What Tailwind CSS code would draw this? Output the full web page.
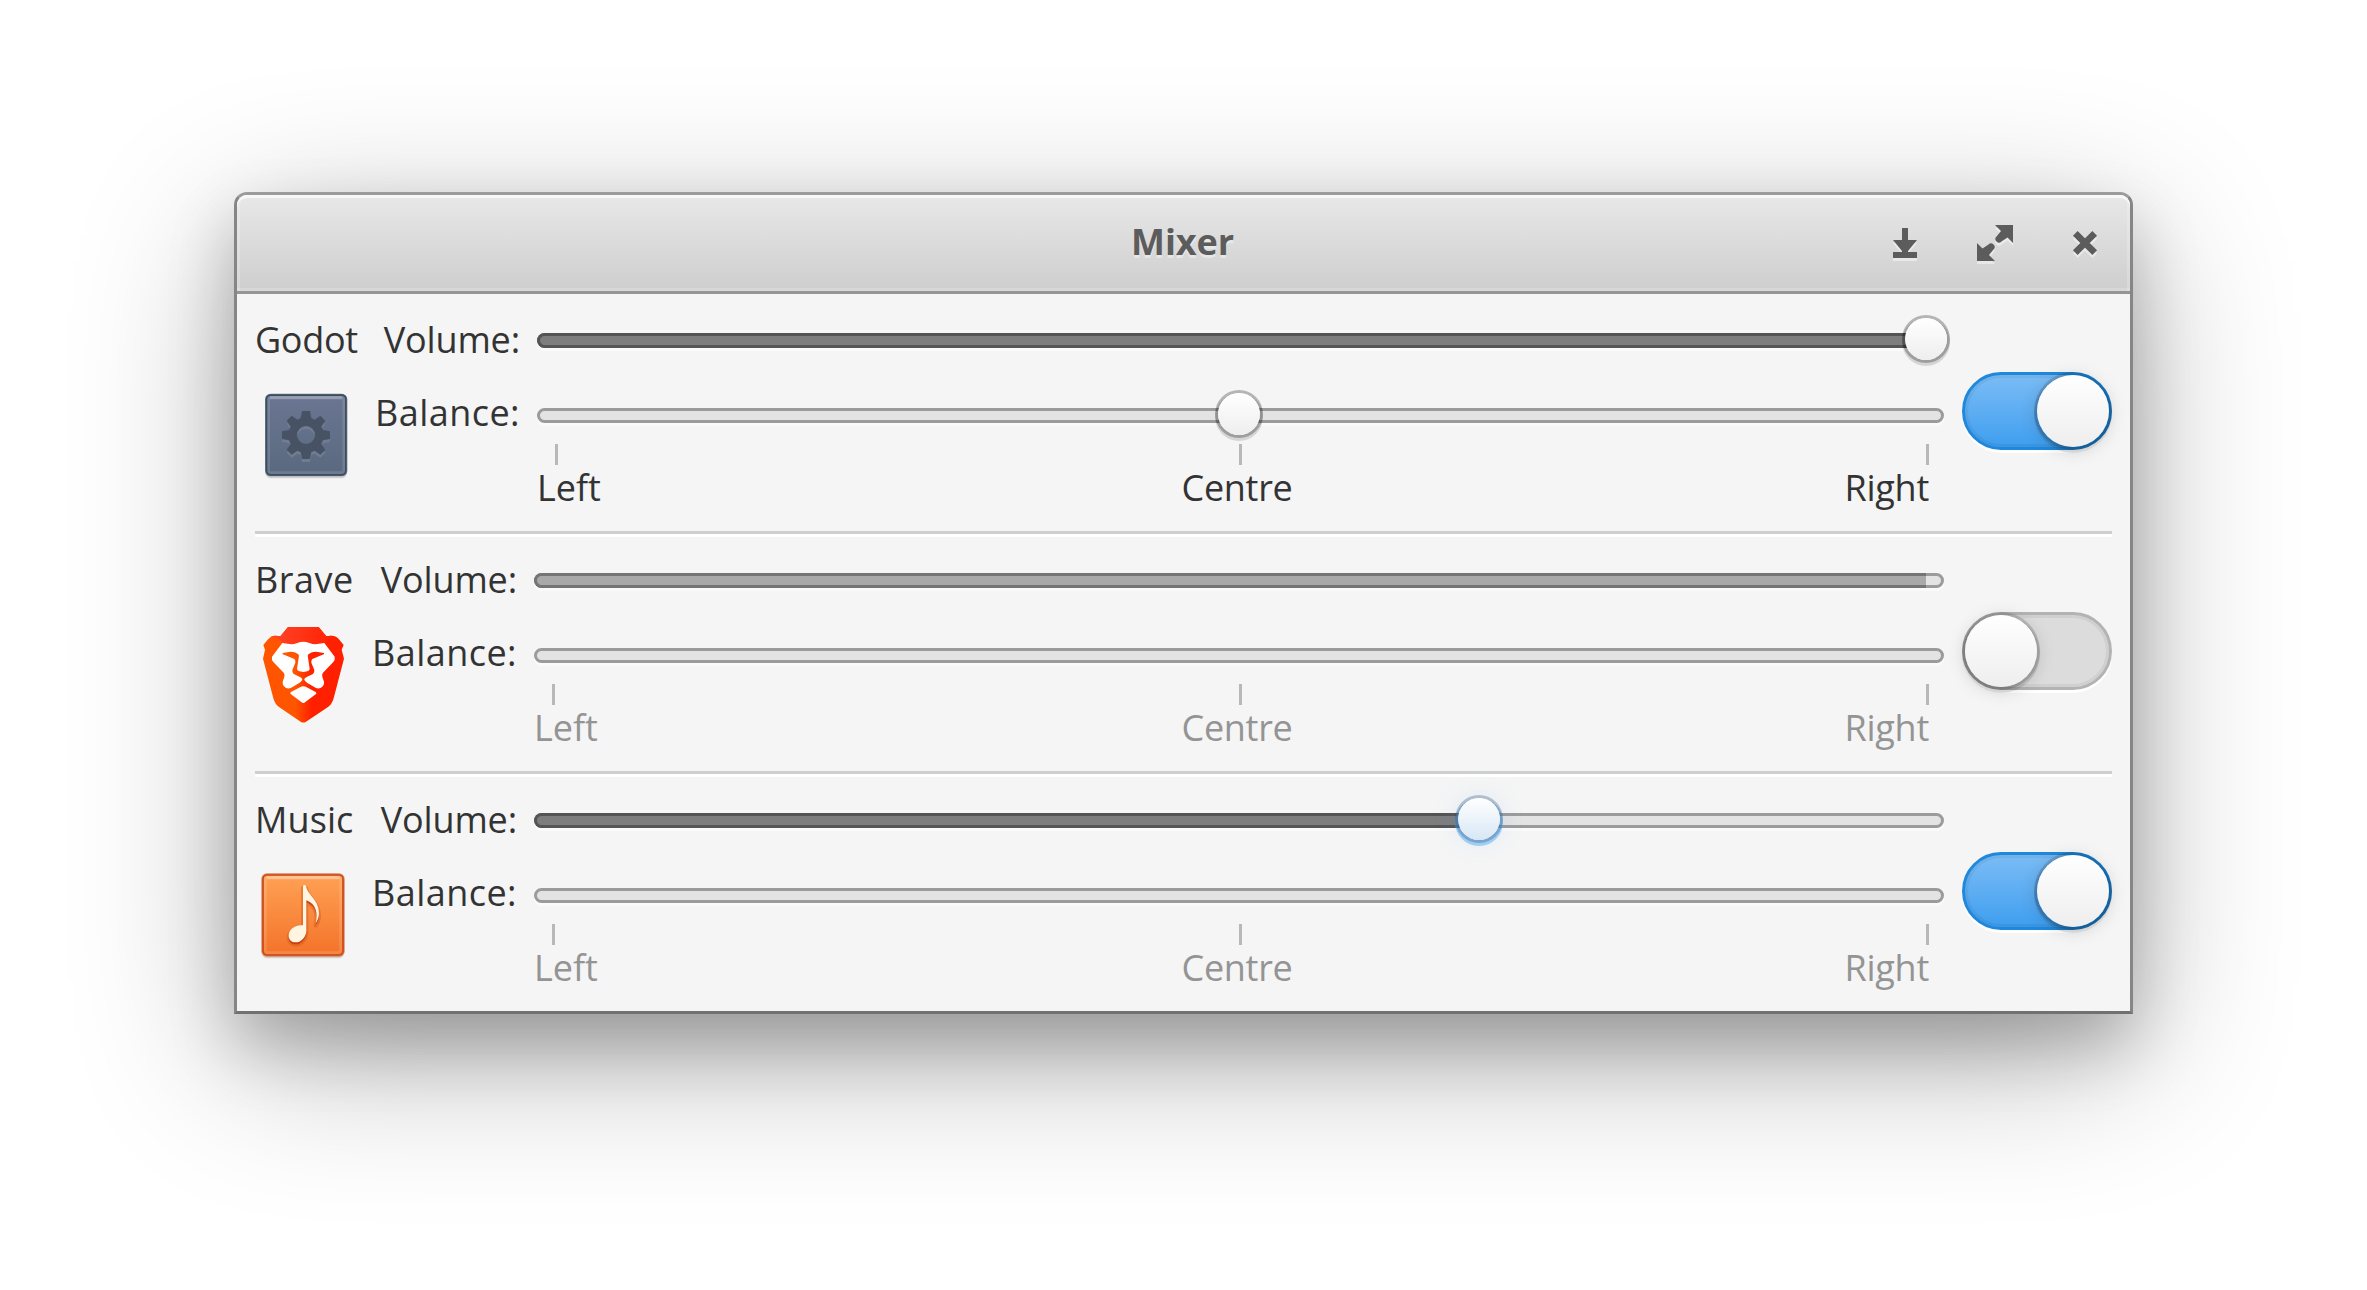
<!DOCTYPE html>
<html lang="en">
<head>
<meta charset="utf-8">
<title>Mixer</title>
<script src="https://cdn.jsdelivr.net/npm/@tailwindcss/browser@4"></script>
</head>
<body class="flex h-screen w-screen items-start overflow-hidden bg-white pl-[234px] pt-[192px] font-['Open_Sans',sans-serif] text-[36px] leading-[48px] text-[#333]">
<main class="flex h-[822px] w-[1899px] flex-col rounded-t-[13px] border-[3px] border-t-[#9b9b9b] border-x-[#868686] border-b-[#717171] bg-[#f5f5f5] shadow-[0_42px_160px_rgba(0,0,0,0.3),0_32px_66px_rgba(0,0,0,0.22)]">

  <!-- Title bar -->
  <header class="relative flex h-[99px] shrink-0 items-center justify-center rounded-t-[10px] border-b-[3px] border-[#959595] bg-linear-to-b from-[#e8e8e8] to-[#cecece] shadow-[inset_0_3px_0_#f8f8f8,inset_3px_0_0_rgba(255,255,255,0.2),inset_-3px_0_0_rgba(255,255,255,0.2),inset_0_-3px_0_rgba(255,255,255,0.2)]">
    <h1 class="mt-[-2px] mr-[2px] font-bold tracking-[-0.1px] text-[#5c5c5c] [text-shadow:0_3px_0_rgba(255,255,255,0.4)]">Mixer</h1>
    <nav class="absolute right-[27px] top-[30px] flex gap-[54px]">
      <svg class="size-9 overflow-visible drop-shadow-[0_3px_0_rgba(255,255,255,0.45)]" viewBox="0 0 36 36" fill="#5c5c5c"><path d="M15 3h6v12h9L21 26v1h9v6H6v-6h9v-1L6 15h9z"/></svg>
      <svg class="size-9 overflow-visible drop-shadow-[0_3px_0_rgba(255,255,255,0.45)]" viewBox="0 0 36 36" fill="#5c5c5c"><path d="M18 0H36V18L30.500 12.500L24.500 16.500A3.200 3.200 0 0 1 19.500 11.500L24 6zM0 36V18L5.500 23.500L11.500 19.500A3.200 3.200 0 0 1 16.500 24.500L12 30L18 36z"/></svg>
      <svg class="size-9 overflow-visible drop-shadow-[0_3px_0_rgba(255,255,255,0.45)]" viewBox="0 0 36 36" fill="none" stroke="#5c5c5c" stroke-width="6.600"><path d="M8.300 8.300L27.700 27.700M27.700 8.300L8.300 27.700"/></svg>
    </nav>
  </header>

  <!-- Godot -->
  <section class="mx-[18px] flex h-[240px] shrink-0 border-b-[3px] border-[#cfcfcf] shadow-[0_3px_0_#fff]">
    <div class="flex w-[102px] flex-col items-center gap-[23px] pt-[22px]">
      <h2 class="self-start tracking-[-0.3px] whitespace-nowrap">Godot</h2>
      <svg class="size-24" viewBox="24 21 288 288">
        <defs><linearGradient id="slate" x1="0" y1="0" x2="0" y2="1"><stop offset="0" stop-color="#6b7692"/><stop offset="1" stop-color="#5a697f"/></linearGradient></defs>
        <rect x="46" y="46" width="245" height="249" rx="17" fill="#000" opacity=".14"/>
        <rect x="45" y="41" width="247" height="248" rx="17" fill="#6f7f90"/>
        <rect x="49.500" y="45.500" width="238" height="239" rx="12" fill="url(#slate)" stroke="#3d4d60" stroke-width="5"/>
        <rect x="56" y="52" width="225" height="226" rx="8" fill="none" stroke="#fff" stroke-opacity=".12" stroke-width="8"/>
        <path d="M60 53H276" stroke="#fff" stroke-opacity=".22" stroke-width="9"/>
        <g fill="#6e7d91" transform="translate(0 9)">
          <path id="gear-shape" fill-rule="evenodd" d="M156 93H180L184 114L194 119L211 107L226 122L214 140L219 150L240 154V177L219 181L214 192L226 209L211 224L194 212L184 217L180 237H156L152 217L142 212L125 224L110 209L122 192L117 181L96 177V154L117 150L122 140L110 122L125 107L142 119L152 114ZM168 138A27 27 0 1 0 168 192A27 27 0 1 0 168 138Z"/>
        </g>
        <path fill="#475364" fill-rule="evenodd" d="M156 93H180L184 114L194 119L211 107L226 122L214 140L219 150L240 154V177L219 181L214 192L226 209L211 224L194 212L184 217L180 237H156L152 217L142 212L125 224L110 209L122 192L117 181L96 177V154L117 150L122 140L110 122L125 107L142 119L152 114ZM168 138A27 27 0 1 0 168 192A27 27 0 1 0 168 138Z"/>
      </svg>
    </div>
    <div class="flex w-[163px] flex-col items-end gap-[25px] pt-[22px]">
      <span class="tracking-[-0.15px]">Volume:</span>
      <span class="tracking-[0.45px]">Balance:</span>
    </div>
    <div class="ml-[17px] mr-[18px] flex grow flex-col pt-[39px]">
      <div class="relative h-[15px] rounded-full border-[3px] border-[#9b9b9b] bg-[#e3e3e3] shadow-[0_3px_0_#fafafa]">
        <div class="absolute -left-[3px] -top-[3px] h-[15px] rounded-l-full border-y-[3px] border-l-[3px] border-[#545454] bg-[#7d7d7d]" style="width:1389px"></div>
        <div class="absolute -top-[18px] size-[42px] rounded-full bg-linear-to-b from-white to-[#eeeeee] shadow-[0_0_0_3px_rgba(0,0,0,0.26),0_3px_0_3px_rgba(0,0,0,0.13)]" style="left:1365px"></div>
      </div>
      <div class="relative mt-[60px] h-[15px] rounded-full border-[3px] border-[#9b9b9b] bg-[#e3e3e3] shadow-[0_3px_0_#fafafa]">
        <div class="absolute -top-[18px] size-[42px] rounded-full bg-linear-to-b from-white to-[#eeeeee] shadow-[0_0_0_3px_rgba(0,0,0,0.26),0_3px_0_3px_rgba(0,0,0,0.13)]" style="left:678px"></div>
      </div>
      <div class="mt-[21px] flex h-[21px] justify-between pl-[18px] pr-[15px]">
        <i class="w-[3px] bg-[#b8b8b8]"></i><i class="-ml-[3px] w-[3px] bg-[#b8b8b8]"></i><i class="w-[3px] bg-[#b8b8b8]"></i>
      </div>
      <div class="mt-[-1px] flex pr-[15px]">
        <span class="flex-1">Left</span><span class="ml-[8px] tracking-[-0.3px]">Centre</span><span class="flex-1 text-right tracking-[-0.25px]">Right</span>
      </div>
    </div>
    <div class="mt-[78px] flex h-[78px] w-[150px] justify-end rounded-full border-[3px] border-[#2088db] bg-linear-to-b from-[#7abcf5] to-[#3d9eef] shadow-[0_3px_0_#fff,inset_0_0_0_3px_rgba(0,0,0,0.05)]">
      <div class="size-[72px] rounded-full bg-linear-to-b from-white to-[#eeeeee] shadow-[0_0_0_3px_rgba(0,0,0,0.14),0_3px_0_3px_rgba(0,0,0,0.1),0_3px_18px_rgba(0,0,0,0.17)]"></div>
    </div>
  </section>

  <!-- Brave -->
  <section class="mx-[18px] flex h-[240px] shrink-0 border-b-[3px] border-[#cfcfcf] shadow-[0_3px_0_#fff]">
    <div class="flex w-24 flex-col items-center gap-[23px] pt-[22px]">
      <h2 class="self-start tracking-[0.5px] whitespace-nowrap">Brave</h2>
      <svg class="size-24" viewBox="15 36 288 288">
        <defs>
          <linearGradient id="mane" gradientUnits="userSpaceOnUse" x1="39" y1="0" x2="282" y2="0"><stop offset=".4" stop-color="#f50"/><stop offset=".6" stop-color="#ff2000"/></linearGradient>
          <linearGradient id="crown" gradientUnits="userSpaceOnUse" x1="60" y1="0" x2="260" y2="0"><stop offset="0" stop-color="#ff452a"/><stop offset="1" stop-color="#ff2000"/></linearGradient>
        </defs>
        <path fill="url(#mane)" d="M114 36H206L229 64C245 60 258 62 268 74L281 90L275 104L282 131L251 250Q246 268 233 277L168 320Q160 325 152 320L88 277Q75 268 70 250L39 131L45 104L40 90L53 74C63 62 76 60 91 64Z"/>
        <path fill="url(#crown)" d="M114 36H206L229 64C245 60 258 62 268 74C252 66 236 70 224 86L196 90Q178 83 160 80Q144 82 124 90L97 86C90 70 74 64 60 67C70 61 80 62 91 64Z"/>
        <path fill="#fff" d="M97 84L124 88Q132 88 142 84Q152 80 160 80Q168 80 178 84Q188 88 196 88L223 84L254 125Q256 134 250 141L219 173Q215 178 217 185L222 200Q223 207 219 213L213 218Q205 222 198 219L172 204Q162 197 163 192Q163 190 170 186L189 177Q194 172 193 165L184 143Q183 136 187 132L223 117Q223 113 217 113L198 110Q182 111 175 118Q172 122 174 128L179 162Q178 168 172 169L160 171L148 169Q142 168 141 162L146 128Q148 122 145 118Q138 111 122 110L103 113Q97 113 97 117L133 132Q137 136 136 143L127 165Q126 172 131 177L150 186Q157 190 157 192Q158 197 148 204L122 219Q115 222 107 218L101 213Q97 207 98 200L103 185Q105 178 101 173L70 141Q64 134 66 125ZM160 214Q165 214 170 217L197 231Q201 234 198 237L163 263Q160 265 157 263L122 237Q119 234 123 231L150 217Q155 214 160 214Z"/>
      </svg>
    </div>
    <div class="flex w-[166px] flex-col items-end gap-[25px] pt-[22px]">
      <span class="tracking-[-0.15px]">Volume:</span>
      <span class="tracking-[0.45px]">Balance:</span>
    </div>
    <div class="ml-[17px] mr-[18px] flex grow flex-col pt-[39px]">
      <div class="relative h-[15px] rounded-full border-[3px] border-[#9b9b9b] bg-[#e3e3e3] shadow-[0_3px_0_#fafafa]">
        <div class="absolute -left-[3px] -top-[3px] h-[15px] rounded-l-full border-y-[3px] border-l-[3px] border-[#757575] bg-[#a9a9a9]" style="width:1392px"></div>
      </div>
      <div class="mt-[60px] h-[15px] rounded-full border-[3px] border-[#9b9b9b] bg-[#e3e3e3] shadow-[0_3px_0_#fafafa]"></div>
      <div class="mt-[21px] flex h-[21px] justify-between pl-[18px] pr-[15px]">
        <i class="w-[3px] bg-[#b8b8b8]"></i><i class="w-[3px] bg-[#b8b8b8]"></i><i class="w-[3px] bg-[#b8b8b8]"></i>
      </div>
      <div class="mt-[-1px] flex pr-[15px] text-[#949494]">
        <span class="flex-1">Left</span><span class="ml-[11px] tracking-[-0.3px]">Centre</span><span class="flex-1 text-right tracking-[-0.25px]">Right</span>
      </div>
    </div>
    <div class="mt-[78px] flex h-[78px] w-[150px] justify-start rounded-full border-[3px] border-[#b3b3b3] bg-[#dcdcdc] shadow-[0_3px_0_#fff,inset_0_0_0_3px_rgba(0,0,0,0.05)]">
      <div class="size-[72px] rounded-full bg-linear-to-b from-white to-[#eeeeee] shadow-[0_0_0_3px_rgba(0,0,0,0.14),0_3px_0_3px_rgba(0,0,0,0.1),0_3px_18px_rgba(0,0,0,0.17)]"></div>
    </div>
  </section>

  <!-- Music -->
  <section class="mx-[18px] flex h-[237px] shrink-0">
    <div class="flex w-24 flex-col items-center gap-[23px] pt-[22px]">
      <h2 class="self-start tracking-[0.1px] whitespace-nowrap">Music</h2>
      <svg class="size-24" viewBox="90 291 288 288">
        <defs><linearGradient id="orange" x1="0" y1="0" x2="0" y2="1"><stop offset="0" stop-color="#ffa154"/><stop offset="1" stop-color="#f37329"/></linearGradient></defs>
        <rect x="110" y="316" width="248" height="249" rx="17" fill="#000" opacity=".14"/>
        <rect x="109" y="310" width="250" height="250" rx="17" fill="#d98766"/>
        <rect x="114" y="315" width="240" height="240" rx="12" fill="url(#orange)" stroke="#cc4a16" stroke-width="5"/>
        <rect x="121" y="322" width="226" height="226" rx="8" fill="none" stroke="#fff" stroke-opacity=".14" stroke-width="8"/>
        <path d="M125 323H343" stroke="#fff" stroke-opacity=".3" stroke-width="9"/>
        <g fill="#d9561b" stroke="#d9561b" stroke-width="12" stroke-linejoin="round" opacity=".45"><use href="#note" y="7"/></g>
        <g fill="#c6410e"><use href="#note" y="6"/></g>
        <g fill="#fff5e0"><path id="note" d="M234 347Q238 343 243 347C246 374 282 388 282 430C282 443 277 453 272 460C279 430 274 402 244 391V482C244 500 229 517 212 517C199 517 191 508 191 497C191 480 208 463 234 466Z"/></g>
      </svg>
    </div>
    <div class="flex w-[166px] flex-col items-end gap-[25px] pt-[22px]">
      <span class="tracking-[-0.15px]">Volume:</span>
      <span class="tracking-[0.45px]">Balance:</span>
    </div>
    <div class="ml-[17px] mr-[18px] flex grow flex-col pt-[39px]">
      <div class="relative h-[15px] rounded-full border-[3px] border-[#9b9b9b] bg-[#e3e3e3] shadow-[0_3px_0_#fafafa]">
        <div class="absolute -left-[3px] -top-[3px] h-[15px] rounded-l-full border-y-[3px] border-l-[3px] border-[#545454] bg-[#7d7d7d]" style="width:945px"></div>
        <div class="absolute -top-[18px] size-[42px] rounded-full bg-linear-to-b from-white to-[#d8e7f5] shadow-[0_0_0_3px_rgba(20,60,100,0.27),0_3px_0_3px_rgba(80,170,245,0.5),0_0_24px_3px_rgba(80,160,240,0.12)]" style="left:921px"></div>
      </div>
      <div class="mt-[60px] h-[15px] rounded-full border-[3px] border-[#9b9b9b] bg-[#e3e3e3] shadow-[0_3px_0_#fafafa]"></div>
      <div class="mt-[21px] flex h-[21px] justify-between pl-[18px] pr-[15px]">
        <i class="w-[3px] bg-[#b8b8b8]"></i><i class="w-[3px] bg-[#b8b8b8]"></i><i class="w-[3px] bg-[#b8b8b8]"></i>
      </div>
      <div class="mt-[-1px] flex pr-[15px] text-[#949494]">
        <span class="flex-1">Left</span><span class="ml-[11px] tracking-[-0.3px]">Centre</span><span class="flex-1 text-right tracking-[-0.25px]">Right</span>
      </div>
    </div>
    <div class="mt-[78px] flex h-[78px] w-[150px] justify-end rounded-full border-[3px] border-[#2088db] bg-linear-to-b from-[#7abcf5] to-[#3d9eef] shadow-[0_3px_0_#fff,inset_0_0_0_3px_rgba(0,0,0,0.05)]">
      <div class="size-[72px] rounded-full bg-linear-to-b from-white to-[#eeeeee] shadow-[0_0_0_3px_rgba(0,0,0,0.14),0_3px_0_3px_rgba(0,0,0,0.1),0_3px_18px_rgba(0,0,0,0.17)]"></div>
    </div>
  </section>
</main>
</body>
</html>
